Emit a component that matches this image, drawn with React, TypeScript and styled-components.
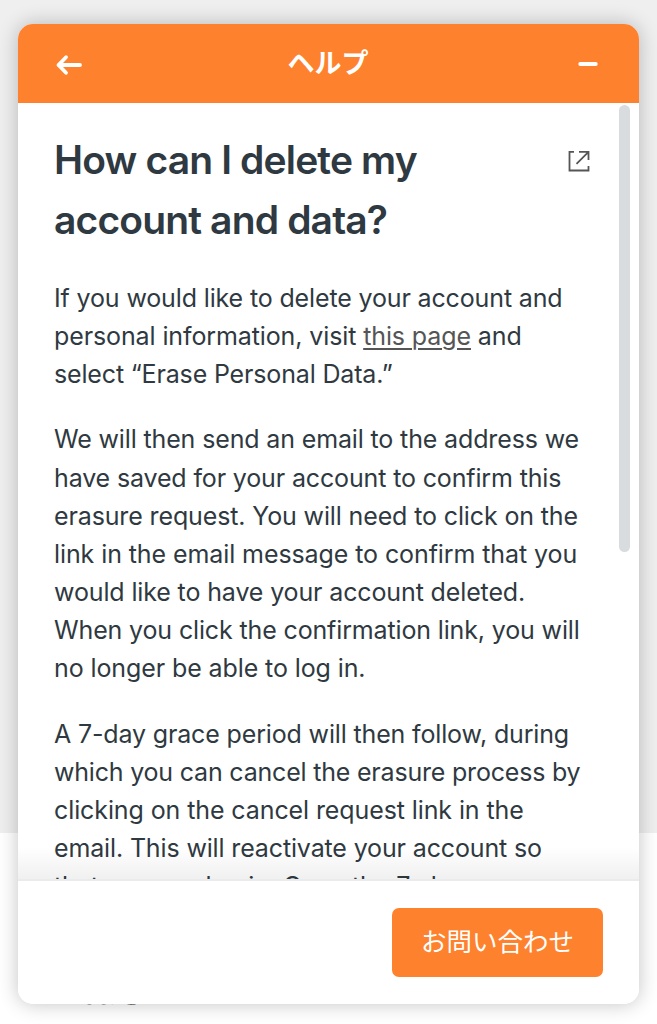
import React from 'react';
import styled, { createGlobalStyle } from 'styled-components';

const Global = createGlobalStyle`
  * { box-sizing: border-box; }
  html, body { margin: 0; background: #fff; }
  body { font-family: Inter, "Noto Sans CJK JP", sans-serif; }
`;
const Page = styled.div`
  height: 1024px;
  overflow: hidden;
  padding: 24px 18px 20px;
  background: linear-gradient(#efefef 833px, #fff 833px);
`;
const PageText = styled.span`
  position: absolute;
  left: 82px;
  top: 988px;
  font-size: 14px;
  line-height: 20px;
  font-weight: 700;
  color: #777;
`;
const Widget = styled.section`
  position: relative;
  height: 980px;
  display: flex;
  flex-direction: column;
  overflow: hidden;
  border-radius: 15px;
  background: #fff;
  box-shadow: 0 0 20px rgba(0, 0, 0, 0.24);
`;
const Header = styled.header`
  flex: 0 0 79px;
  display: flex;
  align-items: center;
  justify-content: space-between;
  padding: 0 36px 0 37px;
  background: #fe822d;
  color: #fff;
`;
const HeaderTitle = styled.h1`
  margin: 0;
  padding-bottom: 4px;
  font: 700 27px/40px "Noto Sans CJK JP", sans-serif;
`;
const IconButton = styled.button`
  display: flex;
  padding: 0;
  border: 0;
  background: none;
  color: inherit;
`;
const Body = styled.main`
  position: relative;
  flex: 1;
  min-height: 0;
  overflow: hidden;
  display: flex;
  justify-content: space-between;
  padding: 27px 9px 0 36px;
  &::after {
    content: '';
    position: absolute;
    inset: auto 0 0 0;
    height: 32px;
    background: linear-gradient(rgba(0, 0, 0, 0), rgba(0, 0, 0, 0.06));
  }
`;
const Article = styled.article`
  flex: 0 0 550px;
  color: #2f3941;
`;
const TitleRow = styled.div`
  display: flex;
  justify-content: space-between;
  margin-bottom: 29px;
`;
const Title = styled.h2`
  margin: 0;
  width: 420px;
  font-size: 39px;
  line-height: 60px;
  font-weight: 600;
  letter-spacing: -0.85px;
`;
const External = styled.a`
  padding: 20px 14px 0 0;
  color: #555;
`;
const Paragraph = styled.p`
  margin: 0 0 27px;
  font-size: 25px;
  line-height: 38.15px;
  white-space: nowrap;
`;
const Line = styled.span<{ $track: number }>`
  display: block;
  letter-spacing: ${(p) => p.$track}px;
`;
const Link = styled.a`
  color: #555;
  text-decoration: underline;
  text-decoration-thickness: 2px;
  text-underline-offset: 3px;
`;
const ScrollThumb = styled.div`
  flex: 0 0 11px;
  height: 447px;
  margin-top: -25px;
  border-radius: 6px;
  background: #d8dcde;
`;
const Footer = styled.footer`
  flex: 0 0 125px;
  display: flex;
  justify-content: flex-end;
  align-items: center;
  padding: 0 36px 0 0;
  border-top: 2px solid #e9ebed;
  background: #fff;
`;
const ContactButton = styled.button`
  width: 211px;
  height: 69px;
  padding: 0 0 5px;
  border: 0;
  border-radius: 7px;
  background: #fe822d;
  color: #fff;
  font: 400 25.5px/40px "Noto Sans CJK JP", sans-serif;
`;

type TextLine = [content: React.ReactNode, track: number];

const paragraphs: TextLine[][] = [
  [
    ['If you would like to delete your account and', -0.14],
    [<>personal information, visit <Link>this page</Link> and</>, -0.11],
    ['select “Erase Personal Data.”', -0.16],
  ],
  [
    ['We will then send an email to the address we', -0.14],
    ['have saved for your account to confirm this', -0.14],
    ['erasure request. You will need to click on the', -0.13],
    ['link in the email message to confirm that you', -0.09],
    ['would like to have your account deleted.', -0.13],
    ['When you click the confirmation link, you will', -0.14],
    ['no longer be able to log in.', -0.1],
  ],
  [
    ['A 7-day grace period will then follow, during', -0.15],
    ['which you can cancel the erasure process by', -0.2],
    ['clicking on the cancel request link in the', -0.1],
    ['email. This will reactivate your account so', -0.14],
    ['that you can log in. Once the 7-day grace', -0.12],
  ],
];

export default function App() {
  return (
    <>
      <Global />
      <Page>
        <PageText>なるほど</PageText>
        <Widget>
          <Header>
            <IconButton aria-label="Back">
              <svg width="28" height="24" viewBox="0 0 28 24" fill="none" stroke="currentColor" strokeWidth="3.8" strokeLinecap="round" strokeLinejoin="round">
                <path d="M25 13H3.500M11 5.200L3.500 13l7.500 7.800" />
              </svg>
            </IconButton>
            <HeaderTitle>ヘルプ</HeaderTitle>
            <IconButton aria-label="Minimize">
              <svg width="30" height="24" viewBox="0 0 30 24" fill="none" stroke="currentColor" strokeWidth="3.8" strokeLinecap="round">
                <path d="M7.200 12H22.800" />
              </svg>
            </IconButton>
          </Header>
          <Body>
            <Article>
              <TitleRow>
                <Title>How can I delete my account and data?</Title>
                <External aria-label="Open article">
                  <svg width="22" height="22" viewBox="0 0 22 22" fill="none" stroke="currentColor" strokeWidth="1.8">
                    <path d="M6 1.800H1.500V20.500H20.500V16M11 1.800H20.500V10M20.500 1.800L8.500 13.800" />
                  </svg>
                </External>
              </TitleRow>
              {paragraphs.map((lines, i) => (
                <Paragraph key={i}>
                  {lines.map(([content, track], j) => (
                    <Line key={j} $track={track}>{content}</Line>
                  ))}
                </Paragraph>
              ))}
            </Article>
            <ScrollThumb />
          </Body>
          <Footer>
            <ContactButton>お問い合わせ</ContactButton>
          </Footer>
        </Widget>
      </Page>
    </>
  );
}
